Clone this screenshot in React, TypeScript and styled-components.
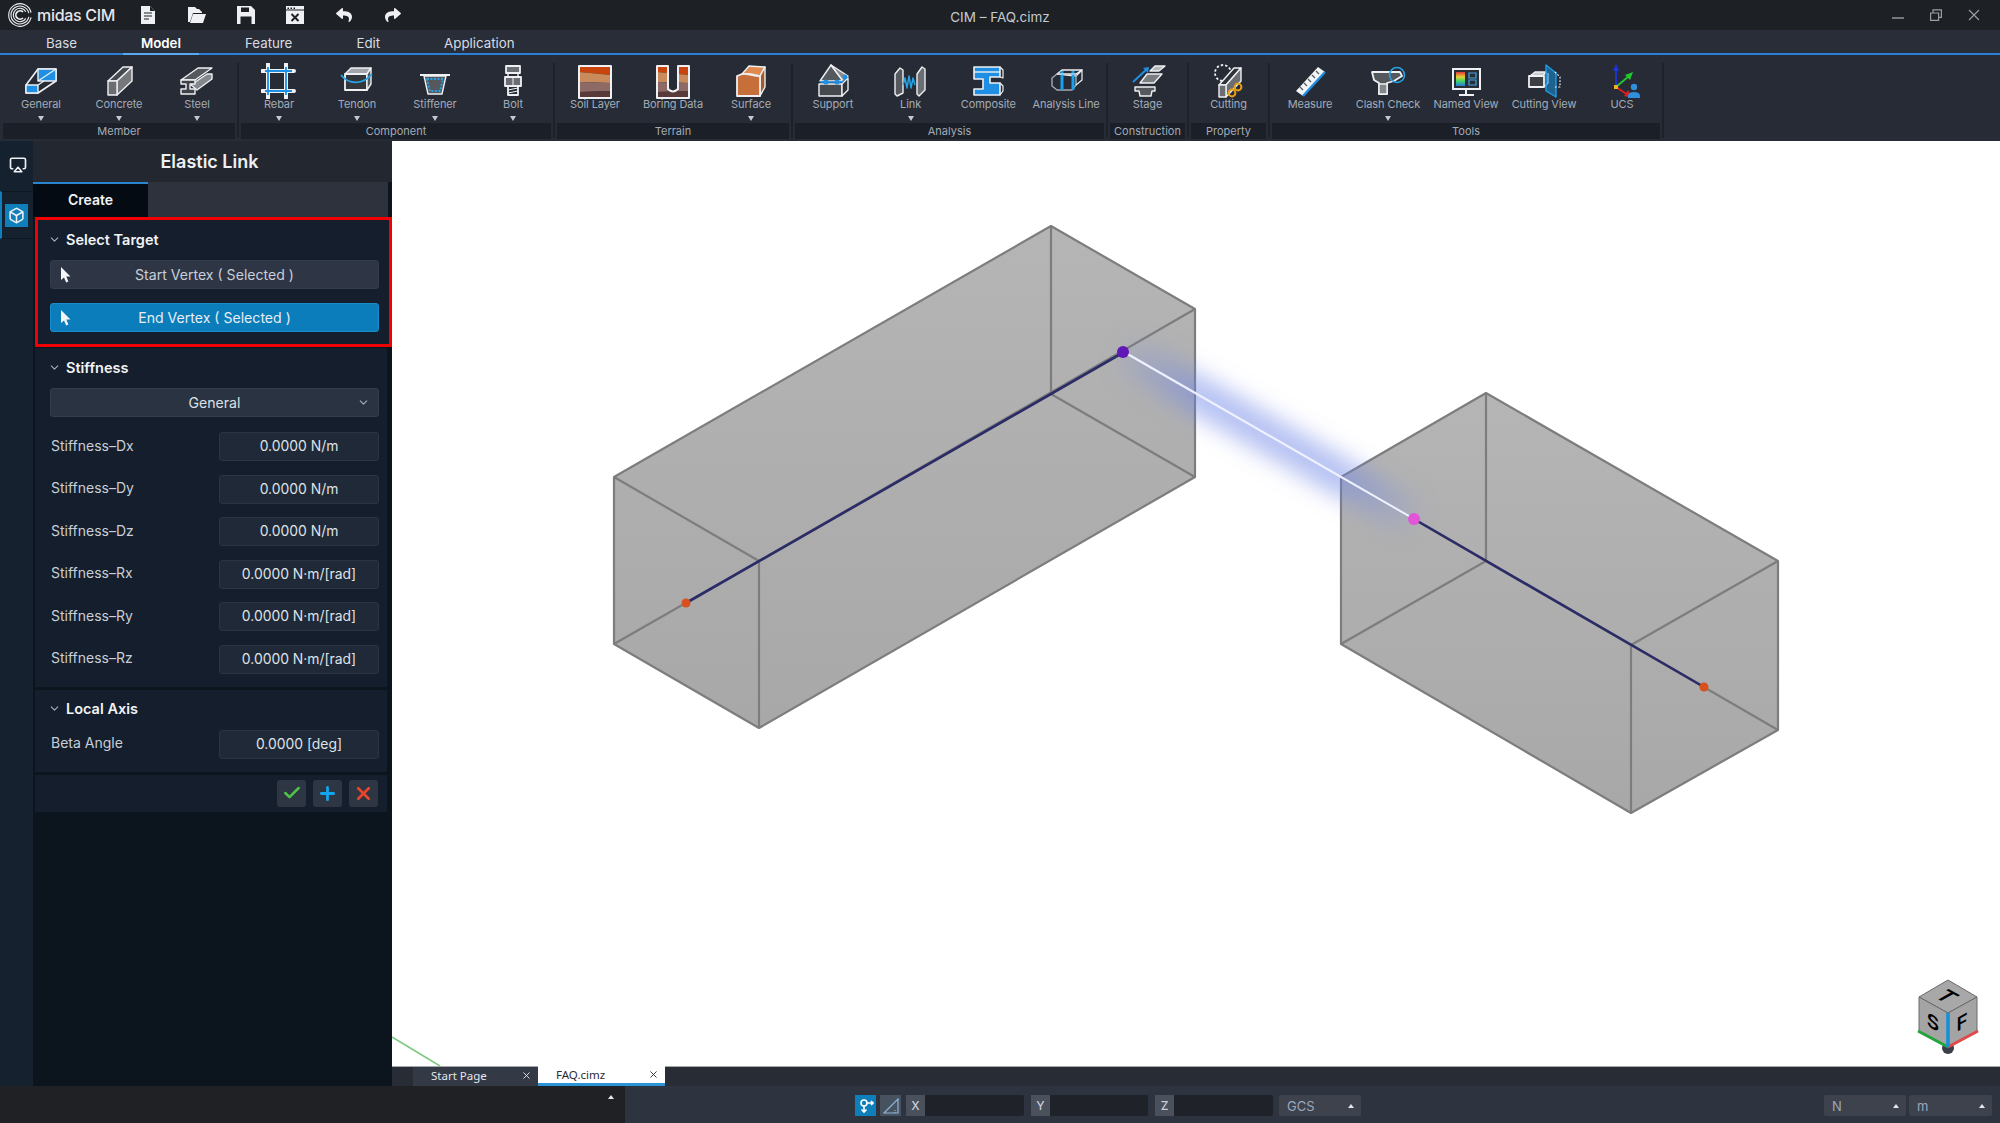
import React from "react";
import styled, { createGlobalStyle } from "styled-components";
import { Airplay, Box, Check, ChevronDown, Plus, X } from "lucide-react";
import { FaReply, FaShare } from "react-icons/fa";

const W = "#eef0f3";
const B = "#1f8fe3";
const G = "#6a6d72";

const GlobalStyle = createGlobalStyle`
  html, body { margin: 0; padding: 0; background: #0c141e; }
  * { box-sizing: border-box; }
  body { font-family: Inter, "Noto Sans", sans-serif; overflow: hidden; }
`;

const Page = styled.div`
  width: 2000px;
  height: 1123px;
  display: flex;
  flex-direction: column;
  overflow: hidden;
`;

/* title bar */
const TitleBar = styled.div`
  height: 30px;
  flex: none;
  display: grid;
  grid-template-columns: 1fr auto 1fr;
  align-items: center;
  background: #1d2025;
`;
const TitleLeft = styled.div`
  display: flex;
  align-items: center;
  padding-left: 8px;
`;
const LogoText = styled.span`
  margin-left: 5px;
  width: 86px;
  color: #e4e6ea;
  font-size: 16px;
  font-weight: 500;
  letter-spacing: -0.3px;
  white-space: nowrap;
`;
const QuickButton = styled.span`
  width: 49px;
  display: flex;
  justify-content: center;
  color: ${W};
`;
const TitleText = styled.div`
  color: #c6cad1;
  font-size: 13.5px;
  padding-top: 4px;
`;
const WindowControls = styled.div`
  display: flex;
  justify-content: flex-end;
  padding-right: 20px;
  gap: 26px;
  align-items: center;
`;

/* menu tabs */
const MenuBar = styled.div`
  height: 25px;
  flex: none;
  display: flex;
  padding-left: 14px;
  background: #282d37;
  border-bottom: 2px solid #2b7fd6;
`;
const MenuTab = styled.div<{ $active?: boolean }>`
  margin: 0 14px;
  padding: 0 18px;
  height: 25px;
  line-height: 27px;
  font-size: 13.3px;
  color: ${(p) => (p.$active ? "#ffffff" : "#d8dce2")};
  font-weight: ${(p) => (p.$active ? 600 : 400)};
  border-bottom: ${(p) => (p.$active ? "2px solid #5aa9f0" : "none")};
`;

/* ribbon */
const Ribbon = styled.div`
  height: 86px;
  flex: none;
  display: flex;
  padding-left: 2px;
  background: #262b35;
`;
const RibbonGroup = styled.div<{ $w: number }>`
  width: ${(p) => p.$w}px;
  display: flex;
  flex-direction: column;
`;
const GroupItems = styled.div`
  height: 68px;
  display: flex;
  justify-content: space-around;
`;
const GroupLabel = styled.div`
  height: 16px;
  margin: 0 1px;
  line-height: 16px;
  text-align: center;
  font-size: 11px;
  color: #a3abb8;
  background: #1b1f27;
`;
const GroupSep = styled.div`
  width: 2px;
  margin: 8px 1px 3px;
  background: #1d2129;
`;
const RibbonItem = styled.div`
  width: 78px;
  padding-top: 8px;
  display: flex;
  flex-direction: column;
  align-items: center;
`;
const ItemLabel = styled.div`
  height: 13px;
  margin-top: -1px;
  line-height: 13px;
  font-size: 11px;
  letter-spacing: -0.1px;
  white-space: nowrap;
  color: #a3abb8;
`;
const ItemCaret = styled.span`
  margin-top: 5px;
  width: 0;
  height: 0;
  border-left: 3px solid transparent;
  border-right: 3px solid transparent;
  border-top: 5px solid #c4c9d1;
`;

/* main */
const Main = styled.div`
  flex: 1;
  min-height: 0;
  display: flex;
`;
const Rail = styled.div`
  width: 33px;
  flex: none;
  background: #15212e;
  color: ${W};
`;
const RailButton = styled.div<{ $active?: boolean }>`
  height: 48px;
  margin-top: ${(p) => (p.$active ? 2 : 0)}px;
  display: flex;
  align-items: center;
  justify-content: center;
  border-left: 2px solid ${(p) => (p.$active ? "#0f7fbb" : "transparent")};
  border-top: ${(p) => (p.$active ? "1px solid #0e1823" : "none")};
  border-bottom: ${(p) => (p.$active ? "1px solid #0e1823" : "none")};
`;
const RailIcon = styled.span<{ $active?: boolean }>`
  width: 23px;
  height: 23px;
  margin-left: -2px;
  display: flex;
  align-items: center;
  justify-content: center;
  background: ${(p) => (p.$active ? "#0f7fbb" : "transparent")};
`;
const Panel = styled.div`
  width: 359px;
  flex: none;
  display: flex;
  flex-direction: column;
  background: #0c141e;
`;
const PanelHeader = styled.div`
  height: 41px;
  flex: none;
  display: flex;
  align-items: center;
  justify-content: center;
  padding-right: 6px;
  background: #23272f;
  color: #eef0f3;
  font-size: 18px;
  font-weight: 600;
`;
const PanelTabs = styled.div`
  height: 35px;
  flex: none;
  margin-right: 4px;
  display: flex;
  background: #2d323d;
`;
const PanelTab = styled.div`
  width: 115px;
  text-align: center;
  line-height: 32px;
  font-size: 14px;
  font-weight: 600;
  color: #f2f3f5;
  background: #040b13;
  border-top: 2px solid #2b86d2;
`;
const Section = styled.div<{ $highlight?: boolean }>`
  width: ${(p) => (p.$highlight ? 357 : 352)}px;
  margin-left: 2px;
  margin-bottom: ${(p) => (p.$highlight ? 1 : 3)}px;
  padding: ${(p) => (p.$highlight ? "9px 10px 12px 12px" : "9px 8px 13px 15px")};
  background: #141e2c;
  border: ${(p) => (p.$highlight ? "3px solid #f00000" : "none")};
`;
const SectionTitle = styled.div`
  height: 20px;
  display: flex;
  align-items: center;
  margin-bottom: 11px;
  color: #f2f3f5;
  font-size: 14.5px;
  font-weight: 600;
`;
const TitleChevron = styled.span`
  width: 17px;
  margin-left: -2px;
  margin-right: 1px;
  display: flex;
  color: #a8aeb8;
`;
const TargetStack = styled.div`
  display: flex;
  flex-direction: column;
  gap: 14px;
`;
const TargetButton = styled.div<{ $active?: boolean }>`
  height: 29px;
  display: grid;
  grid-template-columns: 30px 1fr 30px;
  align-items: center;
  border-radius: 3px;
  font-size: 14.1px;
  color: ${(p) => (p.$active ? "#e8eef4" : "#c8ced8")};
  background: ${(p) => (p.$active ? "#0a7dba" : "#2e3646")};
  border: 1px solid ${(p) => (p.$active ? "#1b8ccb" : "#333c4c")};
`;
const CursorSlot = styled.span`
  display: flex;
  padding-left: 9px;
`;
const ButtonText = styled.span`
  text-align: center;
`;
const Dropdown = styled(TargetButton)`
  margin-bottom: 15px;
  background: #2a3342;
  color: #dde0e5;
`;
const FieldList = styled.div`
  display: flex;
  flex-direction: column;
  gap: 13.6px;
`;
const Field = styled.div`
  height: 29px;
  display: grid;
  grid-template-columns: 169px 160px;
  align-items: center;
`;
const FieldLabel = styled.span`
  padding: 0 0 3px 1px;
  font-size: 14px;
  color: #c9ced6;
`;
const FieldValue = styled.div`
  height: 29px;
  line-height: 27px;
  text-align: center;
  font-size: 13.9px;
  color: #dfe2e7;
  background: #202938;
  border: 1px solid #2b3444;
  border-radius: 3px;
`;
const ActionRow = styled.div`
  width: 352px;
  height: 37px;
  margin-left: 2px;
  padding-right: 9px;
  display: flex;
  align-items: center;
  justify-content: flex-end;
  gap: 7px;
  background: #141e2c;
`;
const ActionButton = styled.div`
  width: 29px;
  height: 27px;
  display: flex;
  align-items: center;
  justify-content: center;
  border-radius: 3px;
  background: #2e3643;
`;

/* workspace */
const Workspace = styled.div`
  flex: 1;
  min-width: 0;
  display: flex;
  flex-direction: column;
`;
const Viewport = styled.div`
  flex: 1;
  min-height: 0;
  background: #ffffff;
`;
const Scene = styled.svg`
  display: block;
`;
const TabStrip = styled.div`
  height: 20px;
  flex: none;
  padding-left: 21px;
  display: flex;
  background: #282c35;
  border-top: 1px solid #a4a6aa;
`;
const FileTab = styled.div<{ $active?: boolean }>`
  width: ${(p) => (p.$active ? 127 : 125)}px;
  margin-top: ${(p) => (p.$active ? -1 : 0)}px;
  padding: 0 6px ${(p) => (p.$active ? 0 : 2)}px 18px;
  display: flex;
  align-items: center;
  justify-content: space-between;
  font-family: "Noto Sans", sans-serif;
  font-size: 11.5px;
  color: ${(p) => (p.$active ? "#2a2d33" : "#e4e6ea")};
  background: ${(p) => (p.$active ? "#ffffff" : "#333945")};
  border-bottom: ${(p) => (p.$active ? "3px solid #2a94d6" : "none")};
`;

/* status bar */
const StatusBar = styled.div`
  height: 37px;
  flex: none;
  display: flex;
  background: #2e343f;
`;
const StatusLeft = styled.div`
  width: 625px;
  padding: 9px 11px 0 0;
  display: flex;
  justify-content: flex-end;
  background: #1f2125;
`;
const StatusCaret = styled.span`
  width: 0;
  height: 0;
  border-left: 3px solid transparent;
  border-right: 3px solid transparent;
  border-bottom: 4px solid #e4e6ea;
`;
const StatusRight = styled.div`
  flex: 1;
  padding: 9px 7px 0 230px;
  display: flex;
  align-items: flex-start;
  height: 30px;
`;
const ToolButton = styled.span<{ $active?: boolean }>`
  width: 21px;
  height: 21px;
  margin-right: ${(p) => (p.$active ? 4 : 5)}px;
  display: flex;
  align-items: center;
  justify-content: center;
  background: ${(p) => (p.$active ? "#0f7fbb" : "#46525e")};
`;
const CoordLabel = styled.span`
  width: 19px;
  height: 21px;
  line-height: 21px;
  text-align: center;
  font-size: 12px;
  font-weight: 500;
  color: #c9ced6;
  background: #4a505c;
`;
const CoordInput = styled.span<{ $w: number }>`
  width: ${(p) => p.$w}px;
  height: 21px;
  margin-right: 7px;
  background: #1f2329;
  border-radius: 0 2px 2px 0;
`;
const UnitSelect = styled.div<{ $w: number; $gap: number }>`
  width: ${(p) => p.$w}px;
  height: 21px;
  margin-left: ${(p) => p.$gap}px;
  padding: 0 7px 0 8px;
  display: flex;
  align-items: center;
  justify-content: space-between;
  font-size: 13px;
  color: #9aa8bd;
  background: #3e424d;
  border-radius: 2px;
`;

/* ribbon drawings */
const Icon = ({ children }: { children: React.ReactNode }) => (
  <svg width="36" height="36" viewBox="0 0 36 36" fill="none" stroke={W} strokeWidth="1.4" strokeLinejoin="round">
    {children}
  </svg>
);

const GeneralIcon = () => (
  <Icon>
    <path d="M3 22 15 6H33L33 18 15 30H3Z" fill="#262b35" strokeWidth="1.6" />
    <path d="M15 6H33V18H15Z" fill={B} />
    <path d="M15 18 33 6" strokeWidth="1.2" />
    <path d="M3 22H15V30H3Z" fill={B} />
    <path d="M15 22 21 18" />
  </Icon>
);
const ConcreteIcon = () => (
  <Icon>
    <path d="M7 18 22 4H31L16 18Z" fill="#46494d" />
    <path d="M16 18 31 4V18L16 32Z" fill="#75777a" />
    <path d="M7 18H16V32H7Z" fill={G} />
  </Icon>
);
const SteelIcon = () => (
  <Icon>
    <path d="M2 17 19 5H33L16 17Z" fill="#55585c" />
    <path d="M12 22 28 11H33V16L18 27Z" fill="#85888b" />
    <path d="M2 17H16V21H11V26H16V31H2V26H7V21H2Z" fill="#3f4246" />
  </Icon>
);
const RebarIcon = () => (
  <Icon>
    <path d="M7 1V35M25 1V35M1 8H33M1 28H33" strokeWidth="4" strokeLinecap="round" />
    <path d="M7 4V32M25 4V32M4 8H31M4 28H31" stroke={B} strokeWidth="1.8" />
  </Icon>
);
const TendonIcon = () => (
  <Icon>
    <path d="M6 11 12 5H32L28 11Z" fill="#a2a5a9" />
    <path d="M6 11H28V27H6Z" fill="#33363b" strokeWidth="1.8" />
    <path d="M28 11 32 5V21L28 27Z" fill="#55585c" />
    <path d="M2 12C10 22 24 22 33 11" stroke="#27a4e8" strokeWidth="1.8" />
  </Icon>
);
const StiffenerIcon = () => (
  <Icon>
    <path d="M3 12H33" strokeWidth="2" />
    <path d="M7 13H29L25 31H11Z" fill="#55585c" />
    <path d="M10 16H26L23 28H13Z" stroke="#27a4e8" strokeWidth="1.8" strokeDasharray="2 1.5" />
  </Icon>
);
const BoltIcon = () => (
  <Icon>
    <path d="M11 3H25V10H11Z" fill="#6a6d72" strokeWidth="1.8" />
    <path d="M13 10H23V14H13Z" />
    <path d="M10 14H26V23H10Z" fill="#6a6d72" strokeWidth="1.8" />
    <path d="M13 23H23V32H13Z" strokeWidth="1.8" />
    <path d="M13 27 23 25M13 30 23 28" strokeWidth="1" />
    <path d="M18 14V23" strokeWidth="1" />
  </Icon>
);
const SoilBands = () => (
  <>
    <path d="M2 4H34V12L2 9Z" fill="#c9440c" stroke="none" />
    <path d="M2 9 34 12V20L2 19Z" fill="#c98a5c" stroke="none" />
    <path d="M2 19 34 20V28L2 29Z" fill="#8d6a66" stroke="none" />
    <path d="M2 29 34 28V35H2Z" fill="#59393a" stroke="none" />
  </>
);
const SoilIcon = () => (
  <Icon>
    <SoilBands />
    <path d="M2 3H34V35H2Z" strokeWidth="2" />
  </Icon>
);
const BoringIcon = () => (
  <Icon>
    <SoilBands />
    <path d="M13 2H23V26Q18 31 13 26Z" fill="#262b35" stroke="none" />
    <path d="M2 3H13V26Q18 31 23 26V3H34V35H2Z" strokeWidth="2" />
  </Icon>
);
const SurfaceIcon = () => (
  <Icon>
    <path d="M9 11 16 3 32 4 27 13 18 11Z" fill="#e08a50" />
    <path d="M27 13 32 4V24L27 33Z" fill="#a55a2c" />
    <path d="M4 13 9 11C14 10 20 13 27 13V33H4Z" fill="#c76f3a" strokeWidth="1.8" />
  </Icon>
);
const SupportIcon = () => (
  <Icon>
    <path d="M16 2 5 18H28Z" fill="#55585c" />
    <path d="M16 2 33 13 28 18Z" fill="#8a8c8f" />
    <path d="M4 21H27V33H4Z" fill="#46494d" />
    <path d="M27 21 33 15V27L27 33Z" fill="#2f3238" />
    <path d="M5 19H27L32 14" stroke="#1f8fe3" strokeWidth="1.5" />
    <circle cx="11" cy="19" r="2.6" fill={B} stroke="none" />
    <circle cx="22" cy="19" r="2.6" fill={B} stroke="none" />
    <circle cx="30" cy="14" r="2.4" fill={B} stroke="none" />
  </Icon>
);
const LinkIcon = () => (
  <Icon>
    <path d="M2 11 7 5 10 7V30L4 33 2 31Z" fill="#55585c" />
    <path d="M24 11 29 4 32 6V27L26 33 24 31Z" fill="#6a6d72" />
    <path d="M10 22 12 15 14 25 16 13 18 25 20 15 22 22" stroke="#27a4e8" strokeWidth="1.5" />
  </Icon>
);
const CompositeIcon = () => (
  <Icon>
    <path d="M4 4H30V14H20V20H30V32H4V26H13V16H4Z" fill={B} strokeWidth="1.6" />
    <path d="M4 9H30" strokeWidth="1.4" />
    <path d="M30 4 33 7V15L30 14M30 20 33 23V28L30 32" strokeWidth="1.2" />
  </Icon>
);
const AnalysisLineIcon = () => (
  <Icon>
    <path d="M9 11 14 7H34L28 13Z" />
    <path d="M4 15 9 11H28V22L24 27H9L4 23Z" stroke="#a8abaf" />
    <path d="M14 8V27M25 8V27" stroke="#1ba0ea" strokeWidth="3" />
    <path d="M9 11H28L34 7V17L28 22" strokeWidth="1.2" />
  </Icon>
);
const StageIcon = () => (
  <Icon>
    <path d="M10 20 17 11H32L24 20Z" fill="#7a7d80" />
    <path d="M20 8 25 3H35L29 8Z" fill="#b5b7ba" />
    <path d="M5 24H25V28H22L21 33H10L9 28H5Z" fill="#55585c" />
    <path d="M3 19 17 6" stroke={B} strokeWidth="2" />
    <path d="M13 5 19 4 18 10Z" fill={B} stroke="none" />
  </Icon>
);
const CuttingIcon = () => (
  <Icon>
    <circle cx="12" cy="10" r="8" strokeDasharray="2.4 2" strokeWidth="1.8" />
    <path d="M8 22 23 5H30L15 22Z" fill="#2f3238" />
    <path d="M15 22 30 5V18L15 34Z" fill="#6a6d72" />
    <path d="M8 22H15V34H8Z" fill={G} />
    <circle cx="21" cy="30" r="3.4" stroke="#e9a014" strokeWidth="2" />
    <circle cx="27" cy="24" r="3.4" stroke="#e9a014" strokeWidth="2" />
  </Icon>
);
const MeasureIcon = () => (
  <Icon>
    <path d="M4 28 26 4 33 9 11 33Z" fill="#f4f5f6" stroke="none" />
    <path d="M11 33 33 9" stroke={B} strokeWidth="2.4" />
    <path d="M8 24 11 27M12 20 15 23M16 16 19 19M20 12 23 15M24 8 27 11" stroke="#5a5d62" strokeWidth="1.4" />
  </Icon>
);
const ClashIcon = () => (
  <Icon>
    <path d="M2 9H30L32 13 24 18 17 20V31H9V20L4 17Z" fill="#55585c" strokeWidth="1.8" />
    <path d="M9 21H17V31H9Z" fill="#85888b" />
    <circle cx="27" cy="12" r="7.5" stroke="#27a4e8" strokeWidth="1.6" />
  </Icon>
);
const NamedViewIcon = () => (
  <svg width="36" height="36" viewBox="0 0 36 36" fill="none">
    <defs>
      <linearGradient id="rainbow" x1="0" y1="0" x2="0" y2="1">
        <stop offset="0" stopColor="#e23a3a" />
        <stop offset="0.35" stopColor="#e6cf2c" />
        <stop offset="0.65" stopColor="#3ed46a" />
        <stop offset="1" stopColor="#2a7ae0" />
      </linearGradient>
    </defs>
    <path d="M5 6H32V26H5Z" fill="#2a2d33" stroke={W} strokeWidth="2" />
    <path d="M8 9H17V23H8Z" fill="url(#rainbow)" />
    <path d="M21 10H28V15H21ZM21 17H28V22H21Z" stroke="#3ea7e8" strokeWidth="1.2" />
    <path d="M18 27V31M11 32H26" stroke={W} strokeWidth="2" />
  </svg>
);
const CuttingViewIcon = () => (
  <Icon>
    <path d="M4 13 9 9H20L16 14Z" fill="#c8cacc" />
    <path d="M3 13H18V24H3Z" fill="#3b3e43" strokeWidth="1.8" />
    <path d="M18 24 22 20V10" />
    <path d="M20 2 30 10V34L20 28Z" fill="#1b8fd8" fillOpacity="0.55" stroke="#1b9fe8" strokeWidth="1.4" />
    <path d="M29 9 34 14V24H28" strokeDasharray="1.8 1.6" strokeWidth="1.2" />
  </Icon>
);
const UcsIcon = () => (
  <svg width="36" height="36" viewBox="0 0 36 36" fill="none">
    <path d="M12 24V6" stroke="#1d35e0" strokeWidth="1.8" />
    <path d="M12 1 9 8H15Z" fill="#1d35e0" />
    <path d="M12 24 25 13" stroke="#22c92c" strokeWidth="1.8" />
    <path d="M29 9 21 12 26 17Z" fill="#22c92c" />
    <path d="M12 24 24 32" stroke="#e21c1c" strokeWidth="1.8" />
    <path d="M28 35 20 33 24 27Z" fill="#e21c1c" />
    <rect x="10" y="22" width="4" height="4" fill="#efb41a" />
    <circle cx="30" cy="24" r="3.2" fill="#2f8fdc" />
    <path d="M24 35V33Q24 29 30 29T36 33V35Z" fill="#2f8fdc" />
  </svg>
);

type RibbonEntry = { label: string; icon: React.ComponentType; caret?: boolean };

const ribbonGroups: { title: string; width: number; items: RibbonEntry[] }[] = [
  {
    title: "Member",
    width: 234,
    items: [
      { label: "General", icon: GeneralIcon, caret: true },
      { label: "Concrete", icon: ConcreteIcon, caret: true },
      { label: "Steel", icon: SteelIcon, caret: true },
    ],
  },
  {
    title: "Component",
    width: 312,
    items: [
      { label: "Rebar", icon: RebarIcon, caret: true },
      { label: "Tendon", icon: TendonIcon, caret: true },
      { label: "Stiffener", icon: StiffenerIcon, caret: true },
      { label: "Bolt", icon: BoltIcon, caret: true },
    ],
  },
  {
    title: "Terrain",
    width: 234,
    items: [
      { label: "Soil Layer", icon: SoilIcon },
      { label: "Boring Data", icon: BoringIcon },
      { label: "Surface", icon: SurfaceIcon, caret: true },
    ],
  },
  {
    title: "Analysis",
    width: 311,
    items: [
      { label: "Support", icon: SupportIcon },
      { label: "Link", icon: LinkIcon, caret: true },
      { label: "Composite", icon: CompositeIcon },
      { label: "Analysis Line", icon: AnalysisLineIcon },
    ],
  },
  { title: "Construction", width: 77, items: [{ label: "Stage", icon: StageIcon }] },
  { title: "Property", width: 77, items: [{ label: "Cutting", icon: CuttingIcon }] },
  {
    title: "Tools",
    width: 390,
    items: [
      { label: "Measure", icon: MeasureIcon },
      { label: "Clash Check", icon: ClashIcon, caret: true },
      { label: "Named View", icon: NamedViewIcon },
      { label: "Cutting View", icon: CuttingViewIcon },
      { label: "UCS", icon: UcsIcon },
    ],
  },
];

const stiffness = [
  ["Stiffness–Dx", "0.0000 N/m"],
  ["Stiffness–Dy", "0.0000 N/m"],
  ["Stiffness–Dz", "0.0000 N/m"],
  ["Stiffness–Rx", "0.0000 N·m/[rad]"],
  ["Stiffness–Ry", "0.0000 N·m/[rad]"],
  ["Stiffness–Rz", "0.0000 N·m/[rad]"],
];

const Logo = () => (
  <svg width="24" height="24" viewBox="0 0 24 24" fill="none" stroke="#f0f1f3" strokeWidth="1.1">
    <path d="M23.05 9.65A11.3 11.3 0 1 0 23.05 14.35" />
    <path d="M20.8 10.1A9 9 0 1 0 20.8 13.9" />
    <path d="M17.8 8.65A6.7 6.7 0 1 0 17.8 15.35" />
    <path d="M15 9A4.2 4.2 0 1 0 15 15" strokeWidth="1.7" />
  </svg>
);

const NewFileIcon = () => (
  <svg width="16" height="18" viewBox="0 0 16 18">
    <path d="M1 0H10L15 5V18H1Z" fill={W} />
    <path d="M4 7H12M4 10H12M4 13H9" stroke="#1d2025" strokeWidth="1.2" />
    <path d="M10 0V5H15" fill="#1d2025" />
  </svg>
);
const OpenIcon = () => (
  <svg width="18" height="18" viewBox="0 0 18 18">
    <path d="M0 1H7L9 3H14V7H5L2 16H0Z" fill={W} />
    <path d="M5 8H18L15 17H2Z" fill={W} />
    <path d="M11 3 14 3 14 6Z" fill="#1d2025" />
  </svg>
);
const SaveIcon = () => (
  <svg width="18" height="18" viewBox="0 0 18 18">
    <path d="M0 0H14L18 4V18H0Z" fill={W} />
    <path d="M4 1.5H12V6H4ZM3.5 10.5H14.5V18H3.5Z" fill="#1d2025" />
  </svg>
);
const CloseFileIcon = () => (
  <svg width="18" height="18" viewBox="0 0 18 18">
    <path d="M0 0H18V18H0Z" fill={W} />
    <path d="M1.5 1.5H3V3H1.5ZM4.5 1.5H6V3H4.5ZM7.5 1.5H9V3H7.5Z" fill="#1d2025" />
    <path d="M0 4H18" stroke="#1d2025" />
    <path d="M5.5 8 12.5 15M12.5 8 5.5 15" stroke="#1d2025" strokeWidth="2" />
  </svg>
);
const CursorIcon = () => (
  <svg width="11" height="16" viewBox="0 0 11 16">
    <path d="M1 0V13L4 10.4 6.2 15.5 8.4 14.5 6.3 9.6 10.5 9.4Z" fill="#f4f5f6" />
  </svg>
);

const Prism = ({ outline, lines }: { outline: string; lines: string[] }) => (
  <>
    <polygon points={outline} fill="url(#boxFill)" stroke="#7d7d7d" strokeWidth="2.2" strokeLinejoin="round" />
    {lines.map((d) => (
      <path key={d} d={d} stroke="#7d7d7d" strokeWidth="2.2" fill="none" />
    ))}
  </>
);

const ModelScene = () => (
  <Scene width="1608" height="925" viewBox="392 141 1608 925">
    <defs>
      <linearGradient id="boxFill" x1="0" y1="0" x2="0" y2="1">
        <stop offset="0" stopColor="#b5b5b5" />
        <stop offset="1" stopColor="#a8a8a8" />
      </linearGradient>
      <linearGradient id="glowFill" gradientUnits="userSpaceOnUse" x1="1124" y1="352" x2="1414" y2="519">
        <stop offset="0" stopColor="#6f86e8" stopOpacity="0.1" />
        <stop offset="0.25" stopColor="#6f86e8" stopOpacity="0.5" />
        <stop offset="0.75" stopColor="#6f86e8" stopOpacity="0.5" />
        <stop offset="1" stopColor="#6f86e8" stopOpacity="0.1" />
      </linearGradient>
      <filter id="soft" x="-30%" y="-40%" width="160%" height="180%">
        <feGaussianBlur stdDeviation="11" />
      </filter>
    </defs>
    <path d="M392 1037 440 1066" stroke="#7ecb7e" strokeWidth="1.6" />

    <Prism
      outline="614,477 1051,226 1195,309 1195,477 759,728 614,644"
      lines={["M614 477 759 561", "M759 561 1195 309", "M759 561V728", "M1051 226V394", "M1051 394 614 644", "M1051 394 1195 477"]}
    />
    <path d="M686 603 1124 352" stroke="#2b2b68" strokeWidth="2.6" />
    <circle cx="686" cy="603" r="4.5" fill="#d8501e" />

    <Prism
      outline="1341,477 1486,393 1778,561 1778,730 1631,813 1341,644"
      lines={["M1486 393V561", "M1341 644 1486 561", "M1486 561 1778 730", "M1341 477 1631 645", "M1631 645 1778 561", "M1631 645V813"]}
    />
    <path d="M1414 519 1704 687" stroke="#2b2b68" strokeWidth="2.6" />
    <circle cx="1704" cy="687" r="4.5" fill="#d8501e" />

    <path d="M1124 352 1414 519" stroke="url(#glowFill)" strokeWidth="38" filter="url(#soft)" />
    <path d="M1124 352 1414 519" stroke="#eef1ff" strokeWidth="2.2" />
    <circle cx="1123" cy="352" r="6" fill="#5f17b5" />
    <circle cx="1414" cy="519" r="6" fill="#e254d8" />

    <circle cx="1948" cy="1048" r="6" fill="#3a3f4a" />
    <polygon points="1948,980 1977,997 1948,1013 1919,997" fill="#a8a8a8" stroke="#6a6a6a" />
    <polygon points="1919,997 1948,1013 1948,1047 1919,1031" fill="#a4a4a4" stroke="#6a6a6a" />
    <polygon points="1977,997 1948,1013 1948,1047 1977,1031" fill="#a4a4a4" stroke="#6a6a6a" />
    <text transform="matrix(0.9,0.5,-0.9,0.5,1947,996)" textAnchor="middle" y="8" fontFamily="Inter, sans-serif" fontSize="22" fontWeight="600" fill="#000">T</text>
    <text transform="matrix(1,0.55,0,1,1933,1022)" textAnchor="middle" y="7" fontFamily="Inter, sans-serif" fontSize="19" fontWeight="600" fill="#000">S</text>
    <text transform="matrix(1,-0.55,0,1,1962,1022)" textAnchor="middle" y="7" fontFamily="Inter, sans-serif" fontSize="19" fontWeight="600" fill="#000">F</text>
    <path d="M1918 1031 1948 1047" stroke="#22a53a" strokeWidth="3" />
    <path d="M1978 1031 1948 1047" stroke="#e04a4a" strokeWidth="3" />
    <path d="M1948 1013V1047" stroke="#1590d8" strokeWidth="3.6" />
  </Scene>
);

export default function App() {
  return (
    <Page>
      <GlobalStyle />
      <TitleBar>
        <TitleLeft>
          <Logo />
          <LogoText>midas CIM</LogoText>
          <QuickButton><NewFileIcon /></QuickButton>
          <QuickButton><OpenIcon /></QuickButton>
          <QuickButton><SaveIcon /></QuickButton>
          <QuickButton><CloseFileIcon /></QuickButton>
          <QuickButton><FaReply size={16} /></QuickButton>
          <QuickButton><FaShare size={16} /></QuickButton>
        </TitleLeft>
        <TitleText>CIM – FAQ.cimz</TitleText>
        <WindowControls>
          <svg width="12" height="12" viewBox="0 0 12 12"><path d="M0 9H12" stroke="#9a9da3" strokeWidth="1.4" /></svg>
          <svg width="12" height="12" viewBox="0 0 12 12" fill="none" stroke="#9a9da3" strokeWidth="1.2"><path d="M.6 4H8.6V11.4H.6ZM3 4V.8H11.4V8.4H8.6" /></svg>
          <svg width="12" height="12" viewBox="0 0 12 12"><path d="M1 1 11 11M11 1 1 11" stroke="#9a9da3" strokeWidth="1.2" /></svg>
        </WindowControls>
      </TitleBar>

      <MenuBar>
        <MenuTab>Base</MenuTab>
        <MenuTab $active>Model</MenuTab>
        <MenuTab>Feature</MenuTab>
        <MenuTab>Edit</MenuTab>
        <MenuTab>Application</MenuTab>
      </MenuBar>

      <Ribbon>
        {ribbonGroups.map((group) => (
          <React.Fragment key={group.title}>
            <RibbonGroup $w={group.width}>
              <GroupItems>
                {group.items.map(({ label, icon: ItemIcon, caret }) => (
                  <RibbonItem key={label}>
                    <ItemIcon />
                    <ItemLabel>{label}</ItemLabel>
                    {caret && <ItemCaret />}
                  </RibbonItem>
                ))}
              </GroupItems>
              <GroupLabel>{group.title}</GroupLabel>
            </RibbonGroup>
            <GroupSep />
          </React.Fragment>
        ))}
      </Ribbon>

      <Main>
        <Rail>
          <RailButton><Airplay size={18} strokeWidth={2.2} /></RailButton>
          <RailButton $active>
            <RailIcon $active><Box size={17} strokeWidth={2.2} /></RailIcon>
          </RailButton>
        </Rail>
        <Panel>
          <PanelHeader>Elastic Link</PanelHeader>
          <PanelTabs>
            <PanelTab>Create</PanelTab>
          </PanelTabs>
          <Section $highlight>
            <SectionTitle>
              <TitleChevron><ChevronDown size={13} /></TitleChevron>
              Select Target
            </SectionTitle>
            <TargetStack>
              <TargetButton>
                <CursorSlot><CursorIcon /></CursorSlot>
                <ButtonText>Start Vertex ( Selected )</ButtonText>
              </TargetButton>
              <TargetButton $active>
                <CursorSlot><CursorIcon /></CursorSlot>
                <ButtonText>End Vertex ( Selected )</ButtonText>
              </TargetButton>
            </TargetStack>
          </Section>
          <Section>
            <SectionTitle>
              <TitleChevron><ChevronDown size={13} /></TitleChevron>
              Stiffness
            </SectionTitle>
            <Dropdown>
              <span />
              <ButtonText>General</ButtonText>
              <CursorSlot><ChevronDown size={13} color="#a8aeb8" /></CursorSlot>
            </Dropdown>
            <FieldList>
              {stiffness.map(([label, value]) => (
                <Field key={label}>
                  <FieldLabel>{label}</FieldLabel>
                  <FieldValue>{value}</FieldValue>
                </Field>
              ))}
            </FieldList>
          </Section>
          <Section>
            <SectionTitle>
              <TitleChevron><ChevronDown size={13} /></TitleChevron>
              Local Axis
            </SectionTitle>
            <Field>
              <FieldLabel>Beta Angle</FieldLabel>
              <FieldValue>0.0000 [deg]</FieldValue>
            </Field>
          </Section>
          <ActionRow>
            <ActionButton><Check size={20} strokeWidth={3} color="#4fc24a" /></ActionButton>
            <ActionButton><Plus size={21} strokeWidth={3.2} color="#13a5ee" /></ActionButton>
            <ActionButton><X size={21} strokeWidth={3} color="#e8452b" /></ActionButton>
          </ActionRow>
        </Panel>
        <Workspace>
          <Viewport>
            <ModelScene />
          </Viewport>
          <TabStrip>
            <FileTab>
              Start Page
              <X size={11} />
            </FileTab>
            <FileTab $active>
              FAQ.cimz
              <X size={11} />
            </FileTab>
          </TabStrip>
        </Workspace>
      </Main>

      <StatusBar>
        <StatusLeft><StatusCaret /></StatusLeft>
        <StatusRight>
          <ToolButton $active>
            <svg width="16" height="16" viewBox="0 0 16 16" fill="none" stroke="#fff" strokeWidth="1.6">
              <circle cx="6" cy="5" r="3" />
              <path d="M6 8V14M3.5 11.5 6 14 8.5 11.5M9 5H15M13 3 15 5 13 7" />
            </svg>
          </ToolButton>
          <ToolButton>
            <svg width="16" height="16" viewBox="0 0 16 16" fill="none" stroke="#8fb4d8" strokeWidth="1.2">
              <path d="M1 15 15 1V15Z" />
              <path d="M12 15V11" strokeDasharray="1 1" />
            </svg>
          </ToolButton>
          <CoordLabel>X</CoordLabel>
          <CoordInput $w={99} />
          <CoordLabel>Y</CoordLabel>
          <CoordInput $w={98} />
          <CoordLabel>Z</CoordLabel>
          <CoordInput $w={99} />
          <UnitSelect $w={82} $gap={-1}>
            GCS
            <StatusCaret />
          </UnitSelect>
          <UnitSelect $w={82} $gap={463}>
            N
            <StatusCaret />
          </UnitSelect>
          <UnitSelect $w={83} $gap={3}>
            m
            <StatusCaret />
          </UnitSelect>
        </StatusRight>
      </StatusBar>
    </Page>
  );
}
